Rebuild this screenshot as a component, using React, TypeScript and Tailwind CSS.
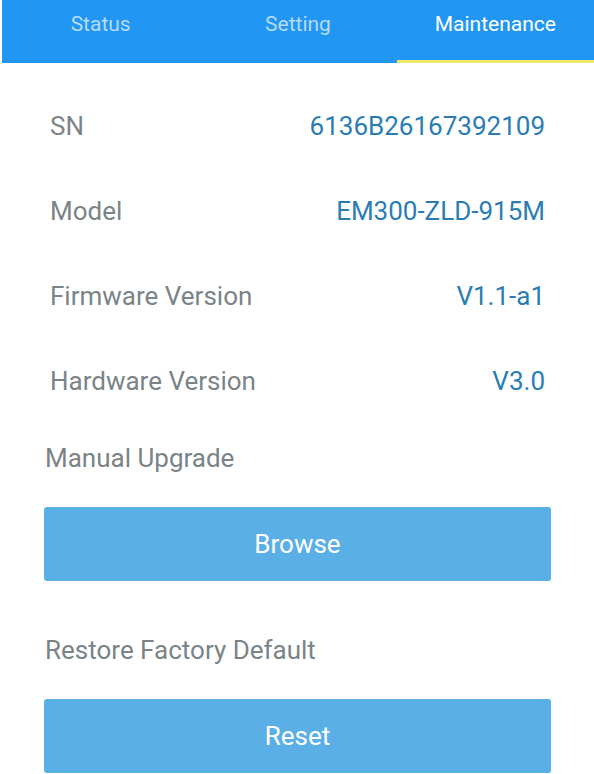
const rows = [
  { label: 'SN', value: '6136B26167392109' },
  { label: 'Model', value: 'EM300-ZLD-915M' },
  { label: 'Firmware Version', value: 'V1.1-a1' },
  { label: 'Hardware Version', value: 'V3.0' },
];

const tabs = ['Status', 'Setting', 'Maintenance'];

export default function App() {
  return (
    <div className="w-[594px] min-h-[774px] bg-white font-['Roboto',sans-serif]">
      <header className="ml-[2px] h-[63px] bg-[#2196f3] grid grid-cols-3">
        {tabs.map((tab, i) => (
          <div
            key={tab}
            className={
              i === 2
                ? 'flex justify-center pt-[10px] text-[21px] leading-[28px] text-white border-b-[3px] border-[#f2e86a]'
                : 'flex justify-center pt-[10px] text-[21px] leading-[28px] text-[#b5dbf8]'
            }
          >
            {tab}
          </div>
        ))}
      </header>

      <main className="pt-[20px] px-[44px]">
        {rows.map((row) => (
          <div
            key={row.label}
            className="h-[85px] flex items-center justify-between pl-[6px] pr-[5px] text-[26px] leading-[32px]"
          >
            <span className="text-[#7a8488]">{row.label}</span>
            <span className="text-[#2a7db3]">{row.value}</span>
          </div>
        ))}

        <h2 className="mt-[19px] pl-[1px] text-[26px] leading-[32px] text-[#7a8488]">
          Manual Upgrade
        </h2>
        <button className="mt-[33px] w-[507px] h-[74px] rounded-[3px] bg-[#5aafe6] text-white text-[26px]">
          Browse
        </button>

        <h2 className="mt-[53px] pl-[1px] text-[26px] leading-[32px] text-[#7a8488]">
          Restore Factory Default
        </h2>
        <button className="mt-[33px] w-[507px] h-[74px] rounded-[3px] bg-[#5aafe6] text-white text-[26px]">
          Reset
        </button>
      </main>
    </div>
  );
}
